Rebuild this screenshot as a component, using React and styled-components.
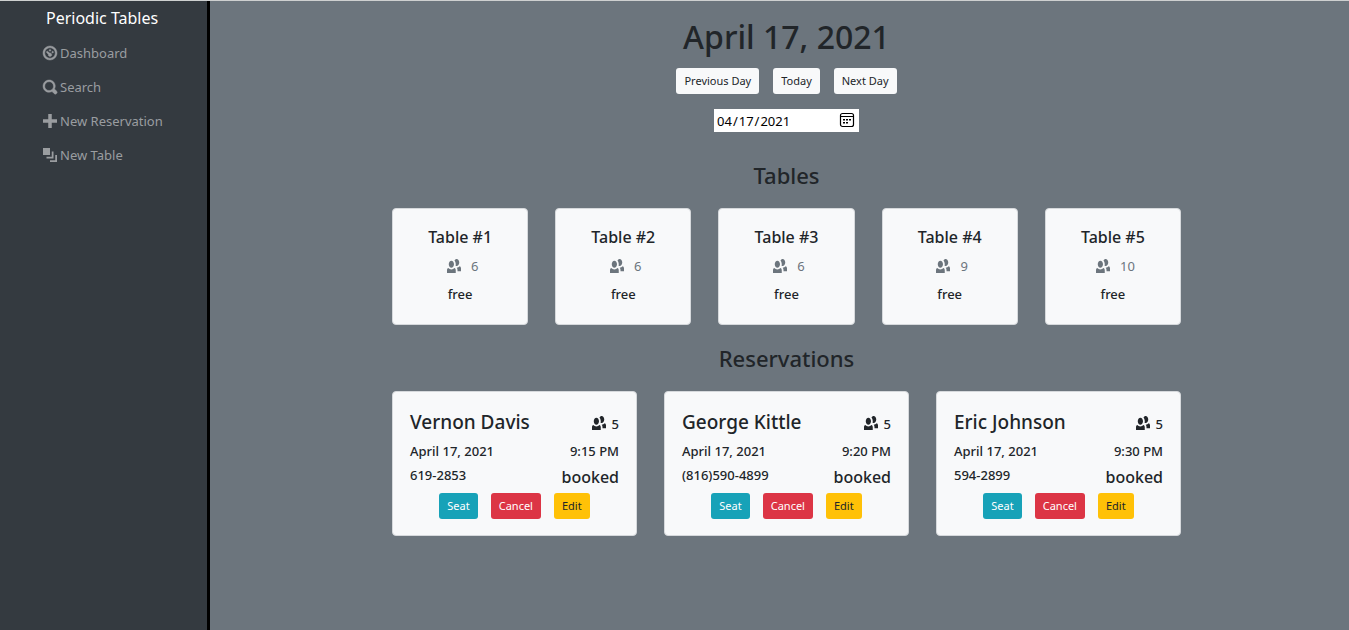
import React, { useState } from "react";
import styled, { createGlobalStyle, css } from "styled-components";

const GlobalStyle = createGlobalStyle`
  *, *::before, *::after { box-sizing: border-box; }
  body {
    margin: 0;
    background: #6c757d;
    color: #212529;
    font-family: "Segoe UI", "Noto Sans", "Open Sans", sans-serif;
    font-size: 15px;
    line-height: 24px;
  }
  h1, h2, h3, p, ul { margin: 0; padding: 0; }
  button, input { font-family: inherit; }
`;

const Page = styled.div`
  display: flex;
  min-height: 100vh;
  border-top: 1px solid #ced0d0;
`;

const Sidebar = styled.aside`
  flex: 0 0 210px;
  border-right: 3px solid #000;
  background: #343a40;
  padding: 5px 0 0 43px;
`;

const Brand = styled.a`
  display: block;
  padding-left: 3px;
  margin-bottom: 6px;
  color: #fff;
  font-size: 16px;
  line-height: 24px;
  text-decoration: none;
`;

const NavList = styled.ul`
  list-style: none;
`;

const NavLink = styled.a`
  display: flex;
  align-items: center;
  gap: 3px;
  color: #9a9da0;
  font-size: 13px;
  line-height: 34px;
  text-decoration: none;
`;

const Glyph = styled.svg`
  flex: none;
  width: 14px;
  height: 14px;
  fill: currentColor;
  stroke: currentColor;
  stroke-width: ${(p) => (p.$bold ? 0.25 : 0)};
  overflow: visible;
`;

const Main = styled.main`
  flex: 1;
  min-width: 0;
  display: flex;
  flex-direction: column;
  align-items: center;
  padding: 12px 0 24px 14px;
`;

const DayTitle = styled.h1`
  font-size: 32px;
  font-weight: 500;
  line-height: 48px;
`;

const ButtonRow = styled.div`
  display: flex;
  justify-content: center;
  gap: ${(p) => p.$gap}px;
`;

const tones = {
  light: css`background: #f8f9fa; color: #212529;`,
  info: css`background: #17a2b8; color: #fff;`,
  danger: css`background: #dc3545; color: #fff;`,
  warning: css`background: #ffc107; color: #212529;`,
};

const Button = styled.button`
  height: 26px;
  padding: 0 8px;
  border: 0;
  border-radius: 3px;
  font-size: 11px;
  line-height: 18px;
  white-space: nowrap;
  cursor: pointer;
  ${(p) => tones[p.$tone]}
`;

const DayButtons = styled(ButtonRow)`
  margin-top: 7px;
`;

const DateField = styled.label`
  position: relative;
  display: block;
  margin-top: 15px;
`;

const DateInput = styled.input`
  display: block;
  width: 145px;
  height: 23px;
  padding: 0 2px;
  border: 0;
  background: #fff;
  color: #000;
  font-size: 13px;
  &::-webkit-datetime-edit-fields-wrapper { padding: 0; }
  &::-webkit-calendar-picker-indicator { opacity: 0; }
`;

const CalendarIcon = styled.svg`
  position: absolute;
  right: 4px;
  top: 3px;
  width: 16px;
  height: 16px;
  pointer-events: none;
`;

const SectionTitle = styled.h2`
  margin: ${(p) => p.$top}px 0 16px;
  font-size: 22px;
  font-weight: 500;
  line-height: 34px;
`;

const CardGrid = styled.section`
  display: grid;
  grid-template-columns: repeat(${(p) => p.$columns}, minmax(0, 1fr));
  gap: 27px;
  width: 100%;
  max-width: 789px;
`;

const Card = styled.article`
  border: 1px solid #d6d9dc;
  border-radius: 4px;
  background: #f8f9fa;
`;

const TableCard = styled(Card)`
  display: flex;
  flex-direction: column;
  align-items: center;
  padding: 16px 8px 18px;
`;

const TableName = styled.h3`
  font-size: 16px;
  font-weight: 500;
  line-height: 24px;
`;

const Capacity = styled.p`
  display: flex;
  align-items: center;
  gap: 10px;
  padding: 5px 0 4px 5px;
  color: #6c757d;
  font-size: 13px;
  line-height: 24px;
`;

const Status = styled.p`
  font-size: 13px;
  font-weight: 500;
  line-height: 24px;
`;

const ReservationCard = styled(Card)`
  padding: 16px 17px;
`;

const Line = styled.div`
  display: flex;
  justify-content: space-between;
  align-items: ${(p) => p.$align || "center"};
  font-size: 13px;
  font-weight: 500;
  line-height: ${(p) => p.$height}px;
`;

const Guest = styled.h3`
  font-size: 19px;
  font-weight: 500;
  line-height: 28px;
`;

const Party = styled.span`
  line-height: 16px;
  ${Glyph} {
    margin-right: 6px;
    vertical-align: -1px;
  }
`;

const Phone = styled.span`
  line-height: 16px;
`;

const Booked = styled.span`
  font-size: 16px;
`;

const Actions = styled(ButtonRow)`
  margin-top: 6px;
`;

const ICONS = {
  dashboard:
    "M4 0c-2.2 0-4 1.8-4 4s1.8 4 4 4 4-1.8 4-4-1.8-4-4-4zm0 1c1.66 0 3 1.34 3 3s-1.34 3-3 3-3-1.34-3-3 1.34-3 3-3zm0 1c-.28 0-.5.22-.5.5s.22.5.5.5.5-.22.5-.5-.22-.5-.5-.5zm-1.66 1a.5.5 0 0 0-.19.84l.91.91c-.02.08-.06.16-.06.25 0 .55.45 1 1 1s1-.45 1-1-.45-1-1-1c-.09 0-.17.04-.25.06l-.91-.91a.5.5 0 0 0-.5-.16zm3.16 0c-.28 0-.5.22-.5.5s.22.5.5.5.5-.22.5-.5-.22-.5-.5-.5z",
  search:
    "M3.5 0c-1.93 0-3.5 1.57-3.5 3.5s1.57 3.5 3.5 3.5c.59 0 1.17-.14 1.66-.41a1 1 0 0 0 .13.13l1 1a1.02 1.02 0 1 0 1.44-1.44l-1-1a1 1 0 0 0-.16-.13c.27-.49.44-1.06.44-1.66 0-1.93-1.55-3.5-3.5-3.5zm0 1c1.39 0 2.5 1.11 2.5 2.5 0 .66-.24 1.27-.66 1.72l-.03.03a1 1 0 0 0-.13.13c-.44.4-1.04.63-1.69.63-1.39 0-2.5-1.11-2.5-2.5s1.11-2.5 2.5-2.5z",
  plus: "M3 0v3h-3v2h3v3h2v-3h3v-2h-3v-3h-2z",
  layers: "M0 0v4h4v-4h-4zm5 2v3h-3v1h4v-4h-1zm2 2v3h-3v1h4v-4h-1z",
  people:
    "M5.5 0c-.51 0-.95.35-1.22.88.45.54.72 1.28.72 2.13 0 .29-.03.55-.09.81.19.11.38.19.59.19.83 0 1.5-.9 1.5-2s-.67-2-1.5-2zm-3 1c-.83 0-1.5.9-1.5 2s.67 2 1.5 2 1.5-.9 1.5-2-.67-2-1.5-2zm4.75 3.16c-.43.51-1.02.82-1.69.84.27.38.44.84.44 1.34v.66h2v-1.66c0-.52-.31-.97-.75-1.19zm-6.5 1c-.44.22-.75.67-.75 1.19v1.66h5v-1.66c0-.52-.31-.97-.75-1.19-.45.53-1.06.84-1.75.84s-1.3-.32-1.75-.84z",
};

function Icon({ name, bold }) {
  return (
    <Glyph $bold={bold} viewBox="0 0 8 8" aria-hidden="true">
      <path d={ICONS[name]} />
    </Glyph>
  );
}

const NAV = [
  { icon: "dashboard", label: "Dashboard", bold: true },
  { icon: "search", label: "Search", bold: true },
  { icon: "plus", label: "New Reservation" },
  { icon: "layers", label: "New Table" },
];

const TABLES = [
  { name: "Table #1", seats: 6 },
  { name: "Table #2", seats: 6 },
  { name: "Table #3", seats: 6 },
  { name: "Table #4", seats: 9 },
  { name: "Table #5", seats: 10 },
];

const RESERVATIONS = [
  { name: "Vernon Davis", phone: "619-2853", time: "9:15 PM" },
  { name: "George Kittle", phone: "(816)590-4899", time: "9:20 PM" },
  { name: "Eric Johnson", phone: "594-2899", time: "9:30 PM" },
];

export default function App() {
  const [date, setDate] = useState("2021-04-17");

  return (
    <>
      <GlobalStyle />
      <Page>
        <Sidebar>
          <Brand href="#">Periodic Tables</Brand>
          <nav>
            <NavList>
              {NAV.map(({ icon, label, bold }) => (
                <li key={label}>
                  <NavLink href="#">
                    <Icon name={icon} bold={bold} />
                    {label}
                  </NavLink>
                </li>
              ))}
            </NavList>
          </nav>
        </Sidebar>
        <Main>
          <DayTitle>April 17, 2021</DayTitle>
          <DayButtons $gap={14}>
            <Button $tone="light">Previous Day</Button>
            <Button $tone="light">Today</Button>
            <Button $tone="light">Next Day</Button>
          </DayButtons>
          <DateField>
            <DateInput
              type="date"
              aria-label="Date"
              value={date}
              onChange={(e) => setDate(e.target.value)}
            />
            <CalendarIcon viewBox="0 0 16 16" aria-hidden="true">
              <rect x="1.5" y="1.5" width="13" height="13" rx="2" fill="none" stroke="#000" strokeWidth="1.2" />
              <path d="M1.5 4.5h13" stroke="#000" />
              <path d="M7 7h2v1.5H7zM10 7h2v1.5h-2zM4 7h2v1.5H4zM4 10h2v1.5H4zM7 10h2v1.5H7z" />
            </CalendarIcon>
          </DateField>
          <SectionTitle $top={26}>Tables</SectionTitle>
          <CardGrid $columns={5}>
            {TABLES.map((t) => (
              <TableCard key={t.name}>
                <TableName>{t.name}</TableName>
                <Capacity>
                  <Icon name="people" />
                  {t.seats}
                </Capacity>
                <Status>free</Status>
              </TableCard>
            ))}
          </CardGrid>
          <SectionTitle $top={16}>Reservations</SectionTitle>
          <CardGrid $columns={3}>
            {RESERVATIONS.map((r) => (
              <ReservationCard key={r.name}>
                <Line $height={28} $align="baseline">
                  <Guest>{r.name}</Guest>
                  <Party>
                    <Icon name="people" />5
                  </Party>
                </Line>
                <Line $height={31}>
                  <span>April 17, 2021</span>
                  <span>{r.time}</span>
                </Line>
                <Line $height={20} $align="flex-start">
                  <Phone>{r.phone}</Phone>
                  <Booked>booked</Booked>
                </Line>
                <Actions $gap={13}>
                  <Button $tone="info">Seat</Button>
                  <Button $tone="danger">Cancel</Button>
                  <Button $tone="warning">Edit</Button>
                </Actions>
              </ReservationCard>
            ))}
          </CardGrid>
        </Main>
      </Page>
    </>
  );
}
